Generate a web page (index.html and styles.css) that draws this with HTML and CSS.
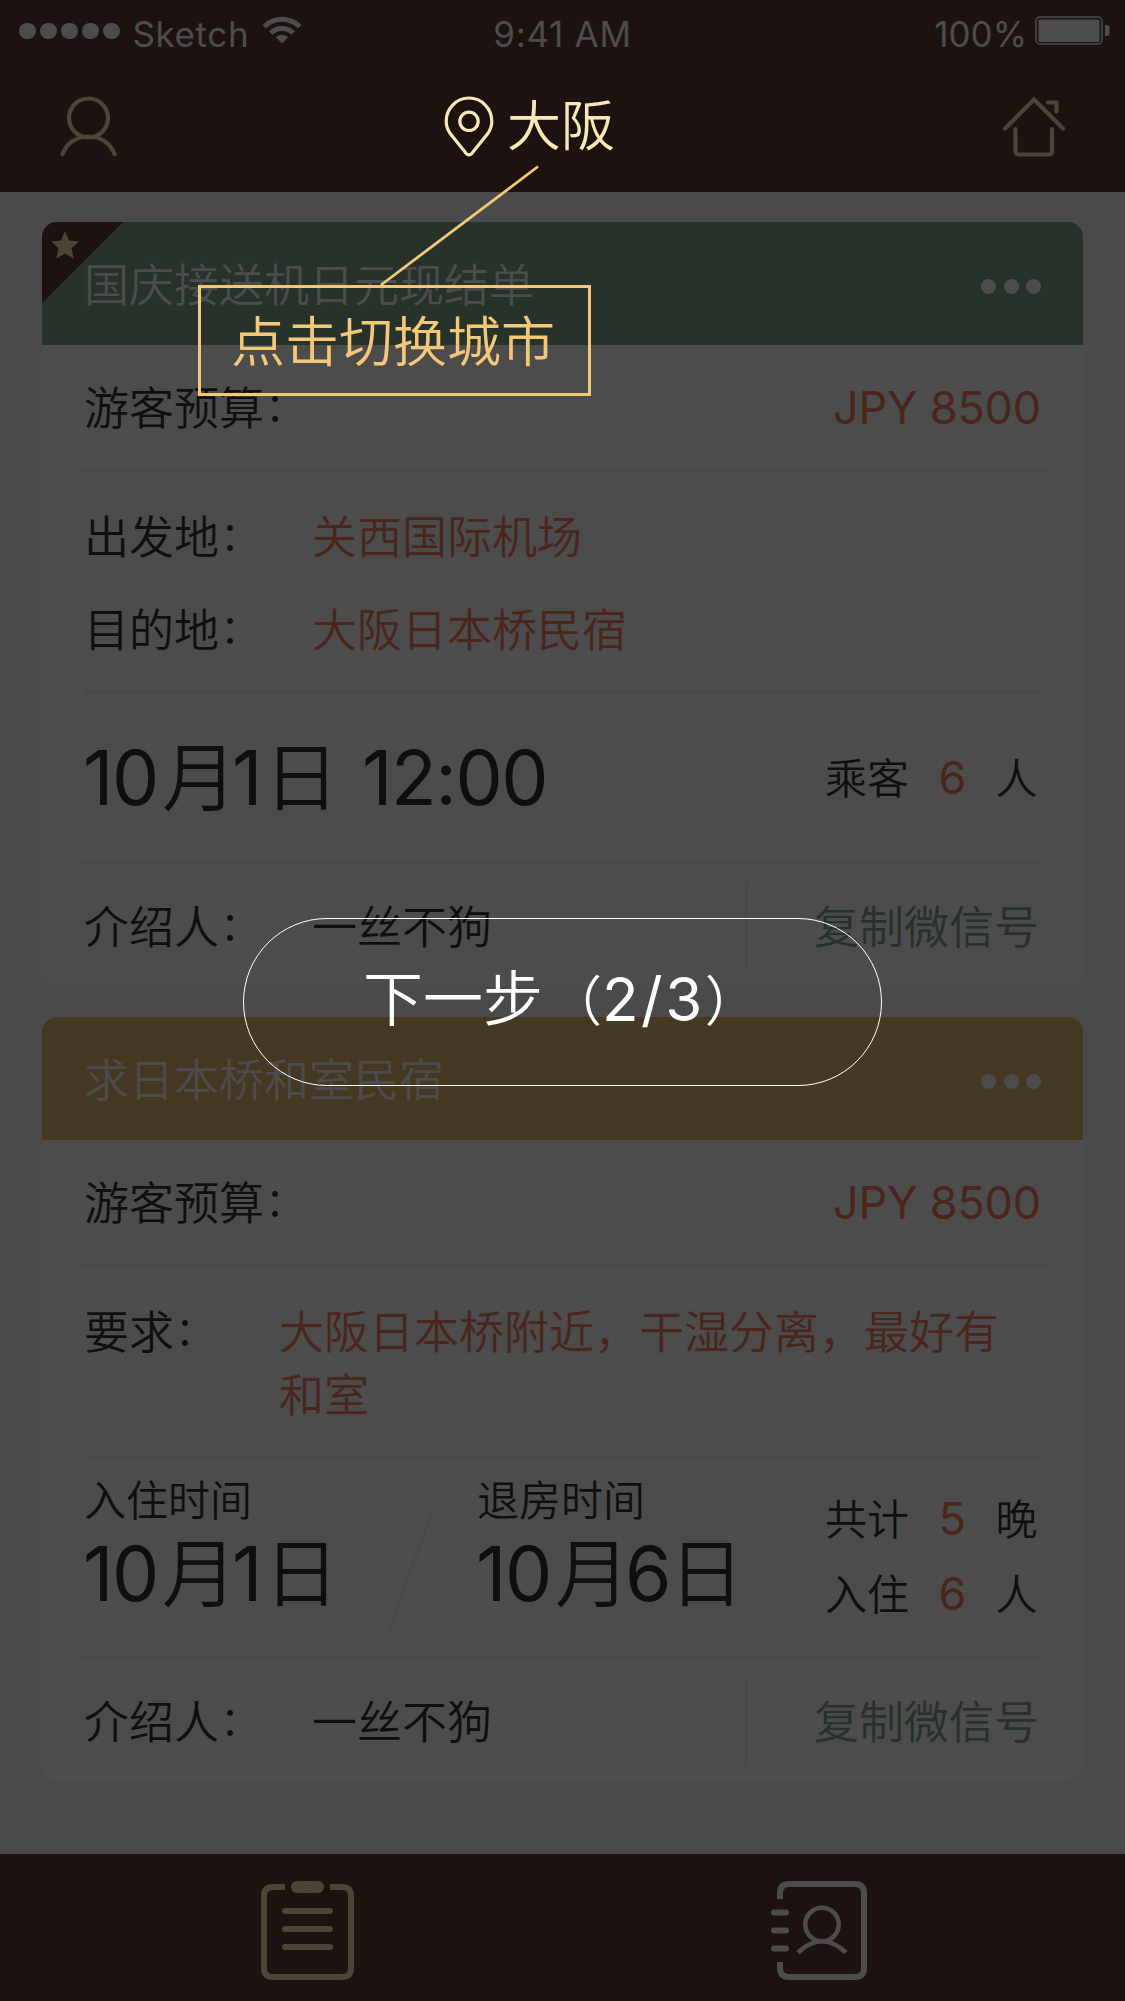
FILE: index.html
```html
<!DOCTYPE html>
<html lang="zh-CN">
<head>
<meta charset="utf-8">
<title>大阪</title>
<link rel="stylesheet" href="styles.css">
</head>
<body>
<div class="screen">
  <header class="top">
    <div class="status">
      <div class="carrier">
        <span class="signal"><i></i><i></i><i></i><i></i><i></i></span>
        <span class="carrier-name">Sketch</span>
        <svg class="wifi" width="40" height="28" viewBox="0 0 40 28" fill="none" stroke="currentColor" stroke-width="5">
          <path d="M2.200 10.500A25.500 25.500 0 0 1 37.800 10.500"/>
          <path d="M8.700 17A16.500 16.500 0 0 1 31.300 17"/>
          <path d="M20 27.500L13.800 21.300A9 9 0 0 1 26.200 21.300Z" fill="currentColor" stroke="none"/>
        </svg>
      </div>
      <span class="time">9:41 AM</span>
      <div class="power">
        <span class="percent">100%</span>
        <svg width="75" height="30" viewBox="0 0 75 30" fill="currentColor">
          <rect x="1" y="1" width="66" height="27" rx="4" fill="none" stroke="currentColor" stroke-width="1.500"/>
          <rect x="3.500" y="3.500" width="61" height="22.500" rx="1.500"/>
          <path d="M70 9h1.500a3 3 0 0 1 3 3v5a3 3 0 0 1-3 3H70z"/>
        </svg>
      </div>
    </div>
    <nav class="nav">
      <svg class="nav-icon" width="60" height="62" viewBox="0 0 60 62" fill="none" stroke="currentColor" stroke-width="4.200" stroke-linecap="round">
        <circle cx="29.500" cy="22" r="19.500"/>
        <path d="M3.500 58C7.500 47.500 17 40.500 29.500 40.500S51.500 47.500 55.500 58"/>
      </svg>
      <div class="city">
        <svg width="50" height="61" viewBox="0 0 50 61" fill="none" stroke="currentColor" stroke-width="3.200">
          <path d="M25 2C12.500 2 2.200 12.300 2.200 25.200C2.200 30 3.700 34 6.200 37.600L22 57.300Q25 60.300 28 57.300L43.800 37.600C46.300 34 47.800 30 47.800 25.200C47.800 12.300 37.500 2 25 2Z"/>
          <circle cx="25" cy="25.300" r="9.200"/>
        </svg>
        <span>大阪</span>
      </div>
      <svg class="nav-icon" width="64" height="62" viewBox="0 0 64 62" fill="none" stroke="currentColor" stroke-width="4.200" stroke-linecap="round" stroke-linejoin="round">
        <path d="M3 32.500L32 3.500L61 32.500"/>
        <path d="M13.500 33V55Q13.500 58.500 17 58.500H46.500Q50 58.500 50 55V33"/>
        <path d="M46 6.500H54.500V15.500" stroke-linejoin="miter"/>
      </svg>
    </nav>
  </header>

  <main class="list">
    <article class="card">
      <div class="card-head green">
        <span class="badge"><svg width="28" height="28" viewBox="0 0 28 28"><path fill="currentColor" d="M14 0L18 9.500L28 10.500L20.500 17.300L22.700 27.500L14 22.500L5.300 27.500L7.500 17.300L0 10.500L10 9.500Z"/></svg></span>
        <h2>国庆接送机日元现结单</h2>
        <span class="more"><i></i><i></i><i></i></span>
      </div>
      <div class="row budget"><span>游客预算<span class="colon">：</span></span><span class="price">JPY 8500</span></div>
      <div class="route">
        <div class="field"><span class="label">出发地<span class="colon">：</span></span><span class="red">关西国际机场</span></div>
        <div class="field"><span class="label">目的地<span class="colon">：</span></span><span class="red">大阪日本桥民宿</span></div>
      </div>
      <div class="row trip">
        <span class="date"><b class="month">10</b>月<b class="day">1</b>日<b class="clock">12:00</b></span>
        <div class="counts"><div class="count"><span>乘客</span><em>6</em><span>人</span></div></div>
      </div>
      <footer class="card-foot">
        <div class="field"><span class="label">介绍人<span class="colon">：</span></span><span>一丝不狗</span></div>
        <span class="copy">复制微信号</span>
      </footer>
    </article>

    <article class="card">
      <div class="card-head gold">
        <h2>求日本桥和室民宿</h2>
        <span class="more"><i></i><i></i><i></i></span>
      </div>
      <div class="row budget"><span>游客预算<span class="colon">：</span></span><span class="price">JPY 8500</span></div>
      <div class="request"><span class="label">要求<span class="colon">：</span></span><p class="red">大阪日本桥附近，干湿分离，最好有和室</p></div>
      <div class="row stay">
        <div class="stay-date"><span class="caption">入住时间</span><span class="date"><b class="month">10</b>月<b class="day">1</b>日</span></div>
        <svg class="slash" width="46" height="121" viewBox="0 0 46 121"><path d="M44.500 1L1.500 120" stroke="currentColor" stroke-width="2.500"/></svg>
        <div class="stay-date"><span class="caption">退房时间</span><span class="date"><b class="month">10</b>月<b class="day">6</b>日</span></div>
        <div class="counts">
          <div class="count"><span>共计</span><em>5</em><span>晚</span></div>
          <div class="count"><span>入住</span><em>6</em><span>人</span></div>
        </div>
      </div>
      <footer class="card-foot">
        <div class="field"><span class="label">介绍人<span class="colon">：</span></span><span>一丝不狗</span></div>
        <span class="copy">复制微信号</span>
      </footer>
    </article>
  </main>

  <nav class="tabs">
    <svg class="tab-orders" width="93" height="99" viewBox="0 0 93 99" fill="none" stroke="currentColor" stroke-width="6">
      <path d="M24 6H12Q3 6 3 15V87Q3 96 12 96H81Q90 96 90 87V15Q90 6 81 6H69"/>
      <rect x="30" y="0" width="33" height="12" rx="6" fill="currentColor" stroke="none"/>
      <path d="M24 30H69M24 48H69M24 66H69" stroke-linecap="round"/>
    </svg>
    <svg class="tab-contacts" width="96" height="99" viewBox="0 0 96 99" fill="none" stroke="currentColor" stroke-width="6">
      <path d="M9 18V12Q9 3 18 3H84Q93 3 93 12V87Q93 96 84 96H18Q9 96 9 87V81"/>
      <path d="M3 31.500H15M3 49.500H15M3 67.500H15" stroke-linecap="round"/>
      <g stroke-width="4.500"><circle cx="51" cy="43.500" r="16.700"/><path d="M27 71.500Q51 49 75 71.500"/></g>
    </svg>
  </nav>

  <svg class="leader" width="162" height="122" viewBox="0 0 162 122"><path d="M2 120L159 1.500" stroke="currentColor" stroke-width="2.800"/></svg>
  <div class="hint">点击切换城市</div>
  <div class="next">下一步<span class="paren open">（</span><b>2/3</b><span class="paren">）</span></div>
</div>
</body>
</html>
```
FILE: styles.css
```css
:root {
  --bar: #1c1310;
  --grey: #4c4c4c;
  --khaki: #4a4537;
  --line: #484848;
  --red: #4a261c;
  --green: #26322a;
  --ink: #0f0f0f;
  --cream: #f8e7b7;
  --accent: #f3c878;
}
* { box-sizing: border-box; margin: 0; padding: 0; }
body { background: #4a4a4a; }
svg { display: block; flex: none; }
h2 { font-weight: 350; }
b, em, .price { font-family: Inter, "Liberation Sans", sans-serif; font-weight: 400; font-style: normal; }

.screen {
  position: relative;
  display: flex;
  flex-direction: column;
  width: 1125px;
  height: 2001px;
  overflow: hidden;
  background: #4a4a4a;
  color: var(--ink);
  font: 350 45px/1 "Noto Sans CJK SC DemiLight", "Noto Sans CJK SC", sans-serif;
  white-space: nowrap;
}

.top { height: 192px; background: var(--bar); }
.status {
  display: grid;
  grid-template-columns: 1fr auto 1fr;
  height: 62px;
  padding: 16px 15px 0 19px;
  color: var(--grey);
  font: 400 35px/37px Inter, "Liberation Sans", sans-serif;
}
.carrier, .power { display: flex; align-items: flex-start; }
.power { justify-content: flex-end; gap: 8px; }
.signal { display: flex; gap: 4.500px; padding: 6.500px 13px 0 0; }
.signal i { width: 16.500px; height: 16.500px; border-radius: 50%; background: currentColor; }
.carrier-name { letter-spacing: .6px; margin-right: 13px; }
.time { letter-spacing: .7px; margin-right: 4px; }
.nav {
  display: flex;
  justify-content: space-between;
  padding: 34px 59px 0 59px;
  color: var(--khaki);
}
.city {
  display: flex;
  gap: 13px;
  margin-right: 62px;
  color: var(--cream);
  font-size: 54px;
  line-height: 54px;
}

.list { flex: 1; padding: 30px 42px 0; }
.card { margin-bottom: 31px; border-radius: 15px; background: var(--grey); overflow: hidden; }
.card-head {
  position: relative;
  display: flex;
  align-items: center;
  justify-content: space-between;
  height: 123px;
  padding: 0 42px;
  color: var(--grey);
}
.card-head h2 { padding-bottom: 3px; font-size: 45px; }
.green { background: var(--green); }
.gold { background: #463923; }
.badge {
  position: absolute;
  top: 0;
  left: 0;
  width: 81px;
  height: 81px;
  padding: 9px;
  background: var(--bar);
  color: var(--khaki);
  clip-path: polygon(0 0, 100% 0, 0 100%);
}
.more { display: flex; gap: 7.500px; padding-top: 6px; }
.more i { width: 15px; height: 15px; border-radius: 50%; background: currentColor; }
.colon { margin-left: 1px; font-size: 40px; line-height: 0; vertical-align: 4px; }

.row { display: flex; align-items: center; justify-content: space-between; margin: 0 42px; border-bottom: 3px solid var(--line); }
.budget { height: 127px; margin: 0 35px; padding: 0 7px 4px; border-bottom-width: 2px; }
.price { padding-top: 3px; color: var(--red); font-size: 45px; letter-spacing: -.2px; }
.red { color: var(--red); }
.route { height: 221px; margin: 0 42px; padding-top: 16px; border-bottom: 3px solid var(--line); }
.field { display: flex; align-items: center; }
.route .field { height: 93px; }
.field .label { width: 228px; }
.trip { height: 171px; }
.date { display: flex; align-items: baseline; padding-bottom: 4px; font-size: 75px; }
.date b { letter-spacing: -1.500px; }
.month { width: 79px; margin-left: -1px; }
.day { width: 32px; margin-left: -5px; }
.day + .clock, .date .clock { margin-left: 23px; }
.stay-date + .slash + .stay-date .day { width: 44px; }
.counts { display: flex; flex-direction: column; gap: 31px; width: 216px; }
.count { display: grid; grid-template-columns: 113.500px 57px 45px; align-items: baseline; font-size: 42px; }
.count em { color: var(--red); font-size: 45px; line-height: 42px; }
.card-foot { display: flex; align-items: center; justify-content: space-between; height: 122px; margin: 0 42px; }
.card-foot .field { padding-bottom: 2px; }
.copy { padding: 21px 2px 23px 66px; border-left: 3px solid var(--line); color: var(--green); }

.request { display: flex; height: 191px; margin: 0 42px; padding: 31px 0 0; border-bottom: 3px solid var(--line); line-height: 63px; }
.request .label { width: 195px; }
.request p { width: 730px; white-space: normal; }
.stay { height: 201px; align-items: flex-start; justify-content: flex-start; }
.stay-date { width: 303px; padding-top: 19px; }
.stay-date .caption { display: block; margin-bottom: 12px; font-size: 42px; }
.slash { margin: 54px 44px 0 0; color: var(--line); }
.stay .counts { margin-left: auto; padding-top: 38px; }

.tabs { display: flex; gap: 417px; height: 147px; padding: 27px 0 0 261px; background: var(--bar); color: var(--khaki); }
.tab-contacts { color: var(--grey); }

.leader { position: absolute; left: 379px; top: 165px; color: var(--accent); }
.hint {
  position: absolute;
  left: 198px;
  top: 285px;
  width: 393px;
  height: 111px;
  padding-right: 3px;
  border: 3px solid var(--accent);
  color: var(--accent);
  font-size: 54px;
  line-height: 101px;
  text-align: center;
}
.next {
  position: absolute;
  left: 243px;
  top: 918px;
  width: 639px;
  height: 168px;
  display: flex;
  align-items: baseline;
  padding-left: 119px;
  border: 1.500px solid #fff;
  border-radius: 84px;
  color: #fff;
  font-size: 60px;
  line-height: 152px;
}
.next b { letter-spacing: 2.500px; }
.paren { font-size: 54px; }
.open { margin-left: 5px; }
```
